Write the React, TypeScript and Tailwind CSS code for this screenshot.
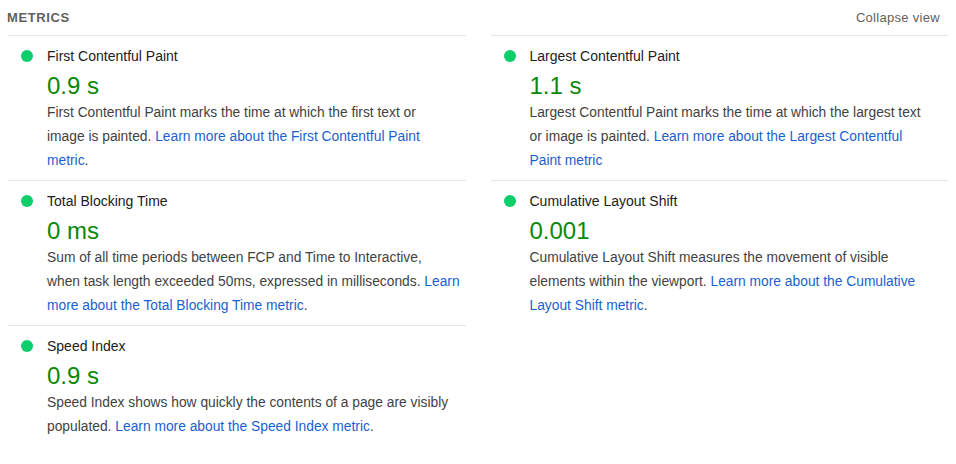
import React from 'react'

interface Metric {
    title: string;
    value: string;
    desc: React.ReactNode;
}

const Link = ({ children }: { children: React.ReactNode }) => (
    <a href="#" className="text-[#1a5fcf]">{children}</a>
)

const left: Metric[] = [
    {
        title: 'First Contentful Paint',
        value: '0.9 s',
        desc: (
            <>
                First Contentful Paint marks the time at which the first text or<br />
                image is painted. <Link>Learn more about the First Contentful Paint<br />metric</Link>.
            </>
        ),
    },
    {
        title: 'Total Blocking Time',
        value: '0 ms',
        desc: (
            <>
                Sum of all time periods between FCP and Time to Interactive,<br />
                when task length exceeded 50ms, expressed in milliseconds. <Link>Learn<br />more about the Total Blocking Time metric</Link>.
            </>
        ),
    },
    {
        title: 'Speed Index',
        value: '0.9 s',
        desc: (
            <>
                Speed Index shows how quickly the contents of a page are visibly<br />
                populated. <Link>Learn more about the Speed Index metric</Link>.
            </>
        ),
    },
]

const right: Metric[] = [
    {
        title: 'Largest Contentful Paint',
        value: '1.1 s',
        desc: (
            <>
                Largest Contentful Paint marks the time at which the largest text<br />
                or image is painted. <Link>Learn more about the Largest Contentful<br />Paint metric</Link>
            </>
        ),
    },
    {
        title: 'Cumulative Layout Shift',
        value: '0.001',
        desc: (
            <>
                Cumulative Layout Shift measures the movement of visible<br />
                elements within the viewport. <Link>Learn more about the Cumulative<br />Layout Shift metric</Link>.
            </>
        ),
    },
]

const MetricRow = ({ m }: { m: Metric }) => (
    <div className="flex border-t border-[#e4e4e4] pt-[10px] pb-[7px] pl-[13px]">
        <span className="mt-[4px] h-3 w-3 shrink-0 rounded-full bg-[#0cce6b]" />
        <div className="ml-[14px] min-w-0">
            <div className="text-[14px] leading-[20px] text-[#212121]">{m.title}</div>
            <div className="mt-[5px] text-[24px] leading-[30px] text-[#0a880a]">{m.value}</div>
            <p className="whitespace-nowrap text-[13.8px] leading-6 text-[#424242]">{m.desc}</p>
        </div>
    </div>
)

export default function App() {
    return (
        <div className="min-h-[464px] w-[956px] bg-white font-['Segoe_UI','Liberation_Sans',Arial,sans-serif]">
            <div className="flex h-[35px] items-center justify-between pl-[7px] pr-[16px]">
                <span className="text-[13px] font-semibold tracking-[0.6px] text-[#5f5f5f]">METRICS</span>
                <span className="text-[13px] tracking-[0.3px] text-[#5f5f5f]">Collapse view</span>
            </div>
            <div className="grid grid-cols-2 gap-x-[25px] px-[8px]">
                <div>
                    {left.map((m) => (
                        <MetricRow key={m.title} m={m} />
                    ))}
                </div>
                <div>
                    {right.map((m) => (
                        <MetricRow key={m.title} m={m} />
                    ))}
                </div>
            </div>
        </div>
    )
}
